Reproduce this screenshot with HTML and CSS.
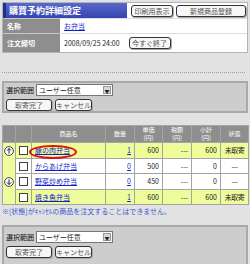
FILE: index.html
```html
<!DOCTYPE html>
<html lang="ja">
<head>
    <meta charset="UTF-8">
    <title>購買予約詳細設定</title>
    <link rel="stylesheet" href="styles.css">
</head>
<body>
<div class="page">
    <!-- 上部：予約の詳細 -->
    <div class="detail">
        <div class="detail_head">
            <h1 class="title">購買予約詳細設定</h1>
            <div class="head_btns">
                <button class="btn btn_print">印刷用表示</button>
                <button class="btn btn_new">新規商品登録</button>
            </div>
        </div>
        <table class="info">
            <tr class="row_name">
                <th>名称</th>
                <td><a href="#" class="link">お弁当</a></td>
            </tr>
            <tr class="row_deadline">
                <th>注文締切</th>
                <td>
                    <span class="deadline">2008/09/25 24:00</span>
                    <button class="btn btn_end">今すぐ終了</button>
                </td>
            </tr>
        </table>
    </div>

    <div class="dots"></div>

    <!-- 操作パネル -->
    <div class="ops">
        <div class="range">
            <span class="range_label">選択範囲</span>
            <span class="select">ユーザー任意<span class="select_arrow">▼</span></span>
        </div>
        <div class="ops_btns">
            <button class="btn btn_done">取寄完了</button>
            <button class="btn btn_cancel">キャンセル</button>
        </div>
    </div>

    <!-- 商品一覧 -->
    <table class="items">
        <colgroup>
            <col class="c_move">
            <col class="c_check">
            <col class="c_name">
            <col class="c_qty">
            <col class="c_price">
            <col class="c_tax">
            <col class="c_sub">
            <col class="c_state">
        </colgroup>
        <tr class="head">
            <th></th>
            <th></th>
            <th>商品名</th>
            <th>数量</th>
            <th><span class="hl">単価</span><span class="hl">(円)</span></th>
            <th><span class="hl">税額</span><span class="hl">(円)</span></th>
            <th><span class="hl">小計</span><span class="hl">(円)</span></th>
            <th>状態</th>
        </tr>
        <tr class="yellow h16">
            <td class="move" rowspan="4">
                <span class="arrow arrow_up"><svg viewBox="0 0 10 10" width="10" height="10"><circle cx="5" cy="5" r="4.4" fill="#fff" stroke="#333" stroke-width="0.9"/><path d="M5 7.6V2.6M3 4.6L5 2.5 7 4.6" fill="none" stroke="#222" stroke-width="1"/></svg></span>
                <span class="arrow arrow_down"><svg viewBox="0 0 10 10" width="10" height="10"><circle cx="5" cy="5" r="4.4" fill="#fff" stroke="#333" stroke-width="0.9"/><path d="M5 2.4V7.4M3 5.4L5 7.5 7 5.4" fill="none" stroke="#222" stroke-width="1"/></svg></span>
            </td>
            <td class="check"><span class="box"></span></td>
            <td class="name"><a href="#" class="link">豚の肉弁当</a><span class="circle"></span></td>
            <td class="num"><a href="#" class="link">1</a></td>
            <td class="num">600</td>
            <td class="num">---</td>
            <td class="num">600</td>
            <td class="state">未取寄</td>
        </tr>
        <tr class="h15">
            <td class="check"><span class="box"></span></td>
            <td class="name"><a href="#" class="link">からあげ弁当</a></td>
            <td class="num"><a href="#" class="link">0</a></td>
            <td class="num">500</td>
            <td class="num">---</td>
            <td class="num">0</td>
            <td class="state">---</td>
        </tr>
        <tr class="h16">
            <td class="check"><span class="box"></span></td>
            <td class="name"><a href="#" class="link">野菜炒め弁当</a></td>
            <td class="num"><a href="#" class="link">0</a></td>
            <td class="num">450</td>
            <td class="num">---</td>
            <td class="num">0</td>
            <td class="state">---</td>
        </tr>
        <tr class="yellow h15">
            <td class="check"><span class="box"></span></td>
            <td class="name"><a href="#" class="link">焼き魚弁当</a></td>
            <td class="num"><a href="#" class="link">1</a></td>
            <td class="num">600</td>
            <td class="num">---</td>
            <td class="num">600</td>
            <td class="state">未取寄</td>
        </tr>
    </table>
    <p class="note">※[状態]がｷｬﾝｾﾙの商品を注文することはできません。</p>

    <!-- 操作パネル（下） -->
    <div class="ops ops_bottom">
        <div class="range">
            <span class="range_label">選択範囲</span>
            <span class="select">ユーザー任意<span class="select_arrow">▼</span></span>
        </div>
        <div class="ops_btns">
            <button class="btn btn_done">取寄完了</button>
            <button class="btn btn_cancel">キャンセル</button>
        </div>
    </div>
</div>
</body>
</html>
```

FILE: styles.css
```css
body {
    margin: 0;
    background-color: #e2e2e2;
    font-family: "Noto Sans CJK JP", "Liberation Sans", sans-serif;
    font-size: 7px;
    color: #222;
}
.page {
    width: 246px;
    padding: 2px;
}

/* ボタン共通 */
.btn {
    font-family: inherit;
    font-size: 7px;
    height: 12px;
    padding: 0;
    line-height: 10px;
    border: 1px solid #333;
    border-radius: 3px;
    background-color: #f7f7f7;
    color: #555;
    box-shadow: 1px 1px 0 #aaa;
}

/* 上部 */
.detail {
    background-color: #fff;
    border: 1px solid #b4b4b4;
}
.detail_head {
    display: flex;
    align-items: center;
    height: 15px;
}
.title {
    margin: 0;
    width: 118px;
    height: 15px;
    line-height: 15px;
    padding-left: 3px;
    border-left: 3px solid #1f2d8c;
    background: linear-gradient(#5868cc, #3445ae);
    color: #fff;
    font-size: 9px;
    font-weight: bold;
}
.head_btns {
    display: flex;
    gap: 3px;
    margin-left: 4px;
}
.btn_print { width: 42px; }
.btn_new { width: 70px; }
.info {
    width: 100%;
    border-collapse: collapse;
}
.info th {
    width: 52px;
    padding-left: 4px;
    text-align: left;
    background-color: #8e8e8e;
    color: #fff;
    font-weight: bold;
    border-top: 1px solid #c8c8c8;
}
.info td {
    padding-left: 4px;
    border-top: 1px solid #ddd;
}
.row_name { height: 15px; }
.row_deadline { height: 18px; }
.deadline { display: inline-block; width: 63px; }
.btn_end { width: 42px; }
.link {
    color: #1122cc;
    text-decoration: underline;
}

.dots {
    margin: 19px 3px 8px 0;
    border-top: 1px dotted #a0a0a0;
}

/* 操作パネル */
.ops {
    height: 28px;
    padding: 0 2px;
    background-color: #cdcdcd;
    border: 2px solid #a9a9a9;
}
.range {
    display: flex;
    align-items: center;
    gap: 2px;
    margin-top: 1px;
}
.range_label { color: #111; }
.select {
    display: flex;
    align-items: center;
    justify-content: space-between;
    width: 73px;
    height: 10px;
    padding-left: 2px;
    background-color: #fff;
    border: 1px solid #777;
}
.select_arrow {
    width: 8px;
    height: 8px;
    margin-right: 1px;
    line-height: 8px;
    text-align: center;
    font-size: 5px;
    background-color: #d8d8d8;
    border: 1px solid #999;
    box-sizing: border-box;
}
.ops_btns {
    display: flex;
    gap: 3px;
    margin-top: 3px;
}
.btn_done { width: 46px; }
.btn_cancel { width: 37px; }
.ops_bottom {
    height: 40px;
    padding-top: 3px;
}

/* 商品一覧 */
.items {
    margin-top: 12px;
    width: 246px;
    border-collapse: collapse;
    table-layout: fixed;
}
.c_move { width: 13px; }
.c_check { width: 16px; }
.c_name { width: 74px; }
.c_qty { width: 29px; }
.c_price { width: 28px; }
.c_tax { width: 29px; }
.c_sub { width: 29px; }
.c_state { width: 28px; }
.items th,
.items td {
    border: 1px solid #a4a4a4;
    padding: 0;
    white-space: nowrap;
}
.items .head {
    height: 17px;
}
.items th {
    background-color: #8e8e8e;
    color: #fff;
    font-weight: normal;
    font-size: 6px;
    line-height: 8px;
}
.hl {
    display: block;
    height: 8px;
    line-height: 8px;
}
.h16 { height: 16px; }
.h15 { height: 15px; }
.items td {
    background-color: #fff;
}
.items .yellow td {
    background-color: #eefc9c;
}
.items .move {
    background-color: #d2d2d2;
    vertical-align: top;
}
.arrow {
    display: block;
    width: 10px;
    height: 10px;
    margin-left: 1px;
}
.arrow svg { display: block; }
.arrow_up { margin-top: 3px; }
.arrow_down { margin-top: 21px; }
.check { text-align: center; }
.box {
    display: inline-block;
    width: 7px;
    height: 7px;
    vertical-align: middle;
    background-color: #fff;
    border: 1px solid #444;
}
.name {
    position: relative;
    padding-left: 3px !important;
}
.circle {
    position: absolute;
    left: -3px;
    top: 2px;
    width: 44px;
    height: 10px;
    border: 2px solid #e01010;
    border-radius: 50%;
}
.num {
    text-align: right;
    padding-right: 3px !important;
}
.state {
    text-align: center;
    letter-spacing: -0.5px;
}

.note {
    margin: 2px 0 10px;
    color: #3a5ad0;
    font-size: 7px;
    line-height: 8px;
}
```
